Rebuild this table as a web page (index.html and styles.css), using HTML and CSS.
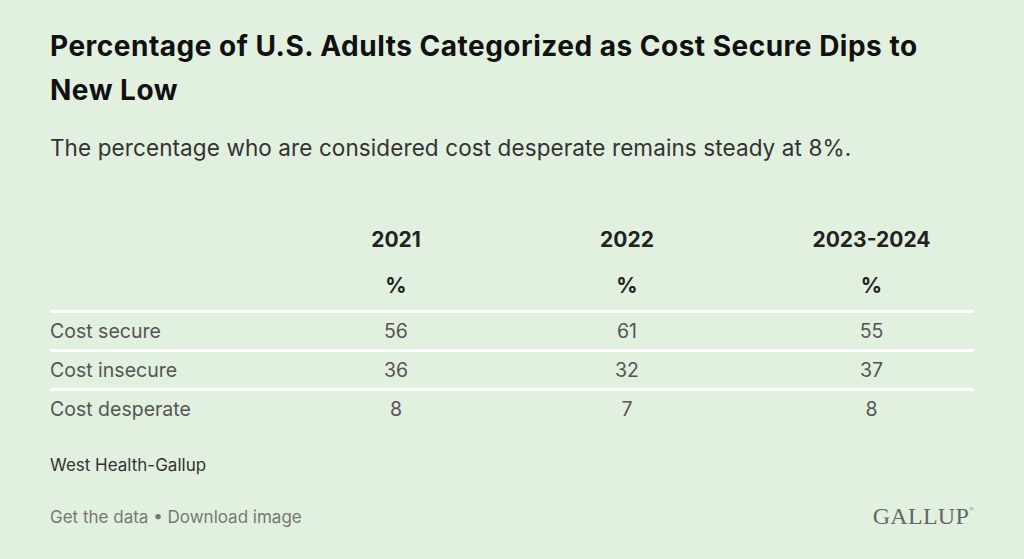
FILE: index.html
```html
<!DOCTYPE html>
<html>
<head>
<meta charset="utf-8">
<link rel="stylesheet" href="styles.css">
</head>
<body>
<div class="card">
  <h1 class="title">Percentage of U.S. Adults Categorized as Cost Secure Dips to New Low</h1>
  <p class="subtitle">The percentage who are considered cost desperate remains steady at 8%.</p>
  <div class="table">
    <div class="row head">
      <div class="cell label"></div>
      <div class="cell">2021</div>
      <div class="cell">2022</div>
      <div class="cell">2023-2024</div>
    </div>
    <div class="row head">
      <div class="cell label"></div>
      <div class="cell">%</div>
      <div class="cell">%</div>
      <div class="cell">%</div>
    </div>
    <div class="row data">
      <div class="cell label">Cost secure</div>
      <div class="cell">56</div>
      <div class="cell">61</div>
      <div class="cell">55</div>
    </div>
    <div class="row data">
      <div class="cell label">Cost insecure</div>
      <div class="cell">36</div>
      <div class="cell">32</div>
      <div class="cell">37</div>
    </div>
    <div class="row data">
      <div class="cell label">Cost desperate</div>
      <div class="cell">8</div>
      <div class="cell">7</div>
      <div class="cell">8</div>
    </div>
  </div>
  <div class="source">West Health-Gallup</div>
  <div class="footer">
    <div class="links">Get the data • Download image</div>
    <div class="logo">GALLUP<sup>®</sup></div>
  </div>
</div>
</body>
</html>
```
FILE: styles.css
```css
html, body {
  margin: 0;
  padding: 0;
  background: #e2f0df;
}
body {
  font-family: Inter, "Noto Sans", sans-serif;
  width: 1024px;
  height: 559px;
  overflow: hidden;
}
.card {
  padding: 24px 50px 0 50px;
}
.title {
  margin: 0;
  font-size: 28px;
  font-weight: 700;
  line-height: 44px;
  color: #111;
  width: 900px;
  letter-spacing: 0.5px;
}
.subtitle {
  margin: 21px 0 0 0;
  font-size: 22.5px;
  line-height: 30px;
  color: #333;
  letter-spacing: 0.1px;
}
.table {
  margin-top: 53px;
  width: 924px;
}
.row {
  display: grid;
  grid-template-columns: 257px 178px 284px 205px;
  align-items: center;
}
.row.head {
  height: 46px;
  font-weight: 700;
  font-size: 21px;
  color: #222;
}
.row.data {
  height: 39px;
  font-size: 19.5px;
  color: #555;
  border-top: 3px solid #fff;
  box-sizing: border-box;
}
.row.head + .row.data {
  margin-top: 2px;
}
.cell {
  text-align: center;
}
.cell.label {
  text-align: left;
}
.source {
  margin-top: 27px;
  font-size: 17px;
  color: #333;
  line-height: 22px;
}
.footer {
  margin-top: 27px;
  width: 924px;
  display: flex;
  justify-content: space-between;
  align-items: center;
}
.links {
  font-size: 17px;
  color: #777;
  line-height: 22px;
}
.logo {
  font-family: "Liberation Serif", "DejaVu Serif", serif;
  font-size: 24px;
  color: #666;
  letter-spacing: 0.3px;
}
.logo sup {
  font-size: 6px;
  vertical-align: top;
  position: relative;
  top: 3px;
}
```
